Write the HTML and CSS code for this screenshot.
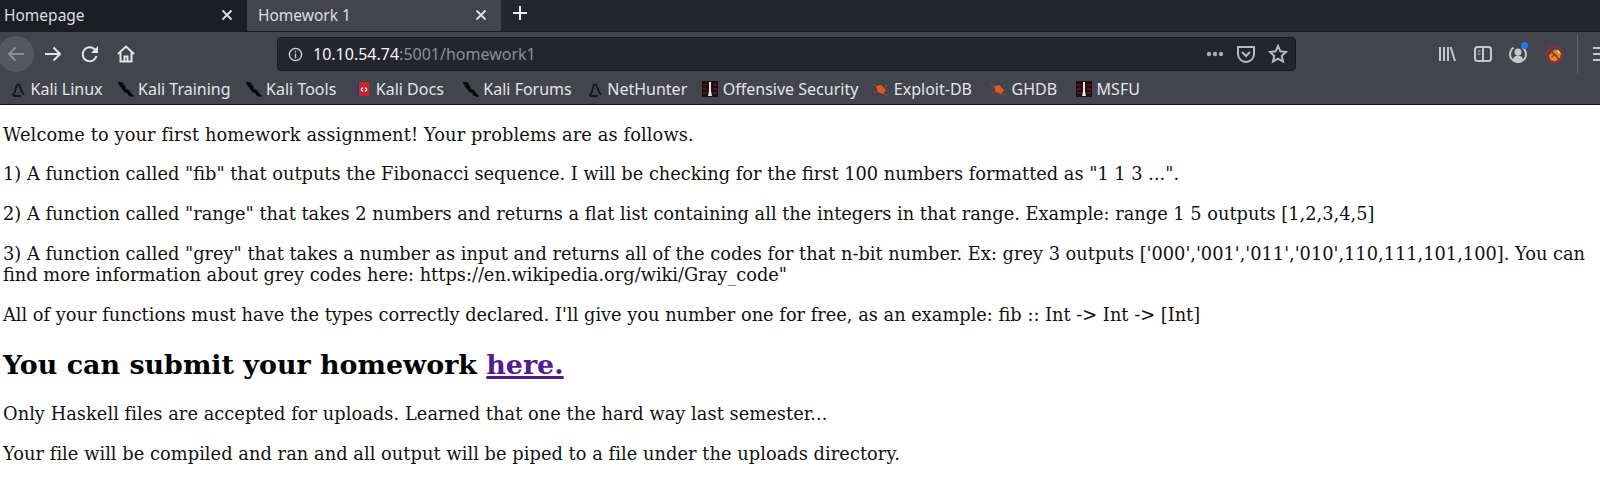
FILE: index.html
```html
<!DOCTYPE html>
<html lang="en">
<head>
    <meta charset="UTF-8">
    <meta name="viewport" content="width=device-width, initial-scale=1.0">
    <title>Homework 1</title>
    <link rel="stylesheet" href="styles.css">
</head>
<body>
    <div class="browser">
        <div class="tabbar">
            <div class="tab">
                <span class="tab-title">Homepage</span>
                <svg class="tab-close" viewBox="0 0 12 12"><path d="M1.5 1.5l9 9M10.5 1.5l-9 9"/></svg>
            </div>
            <div class="tab tab-active">
                <span class="tab-title">Homework 1</span>
                <svg class="tab-close" viewBox="0 0 12 12"><path d="M1.5 1.5l9 9M10.5 1.5l-9 9"/></svg>
            </div>
            <svg class="new-tab" viewBox="0 0 16 16"><path d="M8 1v14M1 8h14"/></svg>
        </div>

        <div class="toolbar">
            <div class="back-btn">
                <svg class="icon dim" viewBox="0 0 20 20"><path d="M18 10H3M9.5 3.500L3 10l6.500 6.500"/></svg>
            </div>
            <svg class="icon forward" viewBox="0 0 20 20"><path d="M2 10h15M10.500 3.500L17 10l-6.500 6.500"/></svg>
            <svg class="icon reload" viewBox="0 0 20 20"><path d="M16.500 12a7 7 0 1 1-1.800-6.600L17 8"/><path class="fill" d="M18 2v7h-7z"/></svg>
            <svg class="icon home" viewBox="0 0 20 20"><path d="M2 10l8-7.500L18 10M4.500 8.500V17.500h11V8.500M8.500 17.500v-5h3v5"/></svg>

            <div class="urlbar">
                <svg class="info" viewBox="0 0 16 16"><circle cx="8" cy="8" r="6.500"/><path d="M8 7v5M8 4v1.500"/></svg>
                <span class="url"><span class="url-host">10.10.54.74</span>:5001/homework1</span>
                <svg class="dots" viewBox="0 0 18 6"><circle cx="3" cy="3" r="2.200"/><circle cx="9" cy="3" r="2.200"/><circle cx="15" cy="3" r="2.200"/></svg>
                <svg class="pocket" viewBox="0 0 20 20"><path d="M2 3h16v7a8 8 0 0 1-16 0z"/><path d="M6 8l4 4 4-4"/></svg>
                <svg class="star" viewBox="0 0 20 20"><path d="M10 2l2.400 5.300 5.600.7-4.200 3.800 1.200 5.700-5-2.900-5 2.900 1.200-5.700L2 8l5.600-.7z"/></svg>
            </div>

            <div class="tools">
                <svg class="tool" viewBox="0 0 18 18"><path d="M2 2v14M6 2v14M10 2v14M12.500 2l4.500 14"/></svg>
                <svg class="tool" viewBox="0 0 18 18"><rect x="1" y="2" width="16" height="14" rx="2.500"/><path d="M9 2v14"/><path class="thin" d="M3.500 6h3M3.500 9h3"/></svg>
                <div class="sync">
                    <svg class="tool" viewBox="0 0 18 18"><path d="M4.500 2.500a8 8 0 1 0 9 0"/><circle class="fill" cx="9" cy="7" r="3.500"/><path class="fill" d="M4 14.500a5 4 0 0 1 10 0 7 7 0 0 1-10 0z"/></svg>
                    <span class="sync-dot"></span>
                </div>
                <svg class="addon" viewBox="0 0 20 20">
                    <path d="M4 11l6-6 4 0 3 4-1 4-5 4-5-1z" fill="#e08a1e"/>
                    <path d="M8 9l5 3M7 13l4-4" stroke="#8a5a16" stroke-width="1.500"/>
                    <path d="M13 5l3 3-2 1z" fill="#f0e2c8"/>
                    <circle cx="10" cy="10" r="8.500" fill="none" stroke="#b3242a" stroke-width="1.600"/>
                    <path d="M4 4l12 12" stroke="#b3242a" stroke-width="1.600"/>
                </svg>
                <span class="divider"></span>
                <svg class="tool menu" viewBox="0 0 18 18"><path d="M1 3h16M1 9h16M1 15h16"/></svg>
            </div>
        </div>

        <div class="bookmarks">
            <a class="bookmark"><svg class="bm-icon" viewBox="0 0 16 16"><path class="kali-net" d="M2 14c3-1 3-3 3.500-6C6 5 7 3 9 3.500c1 2 2 7 5 10.500M3 15h8"/></svg>Kali Linux</a>
            <a class="bookmark"><svg class="bm-icon" viewBox="0 0 16 16"><path class="kali-blade" d="M0 1l4 0 3 4 1 3 3 1 2 3 3 3-1 1-4-1-2-3-3-1-2-3-3-4z"/></svg>Kali Training</a>
            <a class="bookmark"><svg class="bm-icon" viewBox="0 0 16 16"><path class="kali-blade" d="M0 1l4 0 3 4 1 3 3 1 2 3 3 3-1 1-4-1-2-3-3-1-2-3-3-4z"/></svg>Kali Tools</a>
            <a class="bookmark spaced"><svg class="bm-icon" viewBox="0 0 16 16"><rect x="2" y="1" width="12" height="14" fill="#d0222c"/><rect x="2" y="1" width="2" height="14" fill="#2c3a78"/><path d="M6 8.500l2-2M6 8.500l2 2M12 8.500l-2-2M12 8.500l-2 2" stroke="#fff" stroke-width="1.200"/></svg>Kali Docs</a>
            <a class="bookmark spaced"><svg class="bm-icon" viewBox="0 0 16 16"><path class="kali-blade" d="M0 1l4 0 3 4 1 3 3 1 2 3 3 3-1 1-4-1-2-3-3-1-2-3-3-4z"/></svg>Kali Forums</a>
            <a class="bookmark"><svg class="bm-icon" viewBox="0 0 16 16"><path class="kali-net" d="M2 14c3-1 3-3 3.500-6C6 5 7 3 9 3.500c1 2 2 7 5 10.500M3 15h8"/></svg>NetHunter</a>
            <a class="bookmark"><svg class="bm-icon" viewBox="0 0 16 16"><rect x="0" y="0" width="16" height="16" fill="#1d0f10"/><path d="M1 4h4M1 8h4M1 12h4M11 4h4M11 8h4M11 12h4" stroke="#7a2525"/><path d="M7 1h2v9l1 5H6l1-5z" fill="#e6e6e6"/></svg>Offensive Security</a>
            <a class="bookmark"><svg class="bm-icon" viewBox="0 0 16 16"><path d="M3 5l5-1 5 5-3 4-5-2z" fill="#e5581c"/><path d="M0 3l4 3M1 12l4-2M10 13l5 1M12 6l2-2" stroke="#a5491f"/></svg>Exploit-DB</a>
            <a class="bookmark spaced"><svg class="bm-icon" viewBox="0 0 16 16"><path d="M3 5l5-1 5 5-3 4-5-2z" fill="#e5581c"/><path d="M0 3l4 3M1 12l4-2M10 13l5 1M12 6l2-2" stroke="#a5491f"/></svg>GHDB</a>
            <a class="bookmark spaced"><svg class="bm-icon" viewBox="0 0 16 16"><rect x="0" y="0" width="16" height="16" fill="#1d0f10"/><path d="M1 4h4M1 8h4M1 12h4M11 4h4M11 8h4M11 12h4" stroke="#7a2525"/><path d="M7 1h2v9l1 5H6l1-5z" fill="#e6e6e6"/></svg>MSFU</a>
        </div>
    </div>

    <div class="page">
        <p class="intro">Welcome to your first homework assignment! Your problems are as follows.</p>
        <p>1) A function called "fib" that outputs the Fibonacci sequence. I will be checking for the first 100 numbers formatted as "1 1 3 ...".</p>
        <p>2) A function called "range" that takes 2 numbers and returns a flat list containing all the integers in that range. Example: range 1 5 outputs [1,2,3,4,5]</p>
        <p>3) A function called "grey" that takes a number as input and returns all of the codes for that n-bit number. Ex: grey 3 outputs ['000','001','011','010',110,111,101,100]. You can find more information about grey codes here: https://en.wikipedia.org/wiki/Gray_code"</p>
        <p>All of your functions must have the types correctly declared. I'll give you number one for free, as an example: fib :: Int -&gt; Int -&gt; [Int]</p>
        <h2>You can submit your homework <a href="#">here.</a></h2>
        <p class="loose">Only Haskell files are accepted for uploads. Learned that one the hard way last semester...</p>
        <p class="loose">Your file will be compiled and ran and all output will be piped to a file under the uploads directory.</p>
    </div>
</body>
</html>
```
FILE: styles.css
```css
* {
    box-sizing: border-box;
}
body {
    margin: 0;
    background-color: white;
    font-family: "DejaVu Serif", serif;
    overflow: hidden;
}

/* browser chrome */
.browser {
    font-family: "Noto Sans", sans-serif;
    color: #e6e7ea;
}
.tabbar {
    display: flex;
    align-items: stretch;
    height: 32px;
    background-color: #24262f;
    border-bottom: 1px solid #1b1c22;
}
.tab {
    display: flex;
    align-items: center;
    justify-content: space-between;
    width: 247px;
    padding: 0 14px 2px 4px;
    font-size: 15.500px;
    background-color: #1c1e26;
    color: #dcdde0;
}
.tab-active {
    width: 254px;
    padding-left: 11px;
    background-color: #42454d;
}
.tab-close {
    width: 12px;
    height: 12px;
    fill: none;
    stroke: #dfe0e3;
    stroke-width: 1.800;
}
.new-tab {
    width: 16px;
    height: 16px;
    margin: 5px 0 0 11px;
    fill: none;
    stroke: #f0f0f2;
    stroke-width: 2;
}

.toolbar {
    display: flex;
    align-items: center;
    height: 41px;
    padding-top: 3px;
    background-color: #42454d;
    overflow: hidden;
}
.icon {
    width: 20px;
    height: 20px;
    fill: none;
    stroke: #e4e5e8;
    stroke-width: 2;
    flex: none;
}
.icon .fill {
    fill: #e4e5e8;
    stroke: none;
}
.icon.dim {
    stroke: #8c8e93;
}
.back-btn {
    display: flex;
    align-items: center;
    justify-content: center;
    width: 36px;
    height: 36px;
    margin-left: -2px;
    flex: none;
    border-radius: 50%;
    background-color: #55575e;
}
.forward {
    margin-left: 9px;
}
.reload {
    margin-left: 17px;
}
.home {
    margin-left: 16px;
}
.urlbar {
    display: flex;
    align-items: center;
    width: 1019px;
    height: 34px;
    margin-left: 141px;
    flex: none;
    padding: 0 7px 0 10px;
    background-color: #24262f;
    border: 1px solid #1a1b20;
    border-radius: 4px;
}
.info {
    width: 15px;
    height: 15px;
    fill: none;
    stroke: #cfd0d3;
    stroke-width: 1.500;
}
.url {
    margin-left: 10px;
    font-size: 16px;
    color: #8d8f94;
}
.url-host {
    color: #f5f5f6;
}
.dots {
    width: 18px;
    height: 6px;
    margin-left: auto;
    fill: #a9abae;
}
.pocket, .star {
    width: 20px;
    height: 20px;
    fill: none;
    stroke: #b9babd;
    stroke-width: 2;
}
.pocket {
    margin-left: 12px;
}
.star {
    margin-left: 12px;
}
.tools {
    display: flex;
    align-items: center;
    margin-left: 142px;
    flex: none;
}
.tool {
    width: 18px;
    height: 18px;
    fill: none;
    stroke: #c6c7ca;
    stroke-width: 2;
    margin-right: 17.500px;
    flex: none;
}
.tool .thin {
    stroke-width: 1.200;
}
.tool .fill {
    fill: #c6c7ca;
    stroke: none;
}
.sync {
    position: relative;
    display: flex;
}
.sync-dot {
    position: absolute;
    top: -3px;
    left: 12px;
    width: 7px;
    height: 7px;
    border-radius: 50%;
    background-color: #1a7cf0;
}
.addon {
    width: 19px;
    height: 19px;
    flex: none;
}
.divider {
    width: 1px;
    height: 38px;
    margin: 0 14px 0 13px;
    background-color: #63656b;
}
.menu {
    margin: 0;
}

.bookmarks {
    display: flex;
    align-items: center;
    gap: 15px;
    height: 32px;
    padding: 0 0 0 10px;
    font-size: 16px;
    background-color: #42454d;
    border-bottom: 1px solid #111216;
}
.bookmark {
    display: flex;
    align-items: center;
    gap: 4.500px;
    color: #e3e4e7;
}
.bookmark.spaced {
    margin-left: 4px;
}
.bm-icon {
    width: 16px;
    height: 16px;
    flex: none;
}
.kali-net {
    fill: none;
    stroke: #17181b;
    stroke-width: 1.800;
}
.kali-blade {
    fill: #08090b;
}

/* page content */
.page {
    padding: 0 0 0 3px;
    font-size: 17.800px;
    line-height: 21.300px;
    color: #111;
}
.page p {
    margin: 0 0 18.600px;
}
.page p:first-child {
    margin-top: 18.500px;
}
.page .intro {
    letter-spacing: 0.120px;
}
.page .loose {
    letter-spacing: 0.050px;
}
.page h2 {
    margin: 0 0 20.500px;
    padding-top: 4px;
    font-size: 26.900px;
    line-height: 34px;
    color: black;
}
.page a {
    color: #551a8b;
    text-decoration-thickness: 2.500px;
}
```
